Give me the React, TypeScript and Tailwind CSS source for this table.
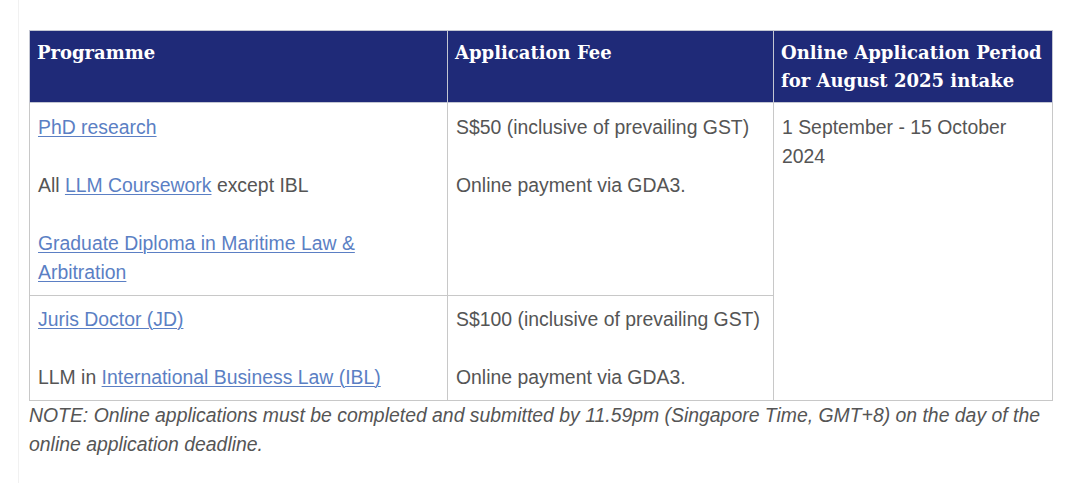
import React from "react";

const link = "text-[#5b7fc4] underline underline-offset-2 decoration-1";

function Th({ children, w }: { children: React.ReactNode; w: string }) {
  return (
    <th
      className={`${w} border border-[#c3c6d2] bg-[#1f2a78] px-[7px] pt-[8px] pb-[7px] text-left align-top text-[18px] font-bold leading-[28px] text-white`}
      style={{ fontFamily: '"DejaVu Serif", Georgia, serif' }}
    >
      {children}
    </th>
  );
}

export default function App() {
  return (
    <div className="h-[483px] w-[1080px] bg-white">
      <div
        className="ml-[18px] h-full border-l border-[#f1f1f1] pl-[10px] pt-[30px] text-[19.4px] leading-[29px] text-[#555555]"
        style={{ fontFamily: '"Liberation Sans", Arial, sans-serif' }}
      >
        <table className="w-[1023px] table-fixed border-collapse">
          <thead>
            <tr>
              <Th w="w-[418px]">Programme</Th>
              <Th w="w-[326px]">Application Fee</Th>
              <Th w="w-[279px]">
                Online Application Period for August 2025 intake
              </Th>
            </tr>
          </thead>
          <tbody>
            <tr>
              <td className="border border-[#c8c8c8] px-[8px] pt-[10px] pb-[8px] align-top">
                <p>
                  <a className={link}>PhD research</a>
                </p>
                <p className="mt-[29px]">
                  All <a className={link}>LLM Coursework</a> except IBL
                </p>
                <p className="mt-[29px]">
                  <a className={link}>
                    Graduate Diploma in Maritime Law &amp; Arbitration
                  </a>
                </p>
              </td>
              <td className="border border-[#c8c8c8] px-[8px] pt-[10px] pb-[8px] align-top">
                <p>S$50 (inclusive of prevailing GST)</p>
                <p className="mt-[29px]">Online payment via GDA3.</p>
              </td>
              <td
                rowSpan={2}
                className="border border-[#c8c8c8] px-[8px] pt-[10px] pb-[8px] align-top"
              >
                1 September - 15 October 2024
              </td>
            </tr>
            <tr>
              <td className="border border-[#c8c8c8] px-[8px] pt-[9px] pb-[8px] align-top">
                <p>
                  <a className={link}>Juris Doctor (JD)</a>
                </p>
                <p className="mt-[29px]">
                  LLM in <a className={link}>International Business Law (IBL)</a>
                </p>
              </td>
              <td className="border border-[#c8c8c8] px-[8px] pt-[9px] pb-[8px] align-top">
                <p>S$100 (inclusive of prevailing GST)</p>
                <p className="mt-[29px]">Online payment via GDA3.</p>
              </td>
            </tr>
          </tbody>
        </table>
        <p className="w-[1030px] italic">
          NOTE: Online applications must be completed and submitted by 11.59pm
          (Singapore Time, GMT+8) on the day of the online application deadline.
        </p>
      </div>
    </div>
  );
}
